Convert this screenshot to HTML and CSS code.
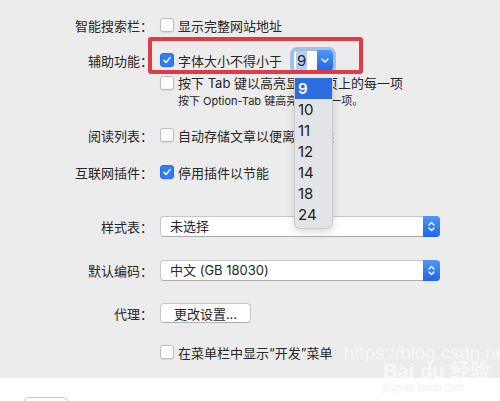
FILE: index.html
```html
<!DOCTYPE html>
<html lang="zh-CN">
<head>
    <meta charset="UTF-8">
    <meta name="viewport" content="width=device-width, initial-scale=1.0">
    <title>高级</title>
    <link rel="stylesheet" href="styles.css">
</head>
<body>
    <div class="pane">
        <!-- Smart search field -->
        <div class="row r-search">
            <div class="label">智能搜索栏：</div>
            <div class="ctrl"><span class="check"></span><span>显示完整网站地址</span></div>
        </div>

        <!-- Accessibility -->
        <div class="row r-access">
            <div class="label">辅助功能：</div>
            <div class="ctrl">
                <span class="check on"><svg viewBox="0 0 14 14"><path d="M3.4 7.3 L5.9 9.8 L10.6 4.2" /></svg></span>
                <span>字体大小不得小于</span>
                <div class="mini-select">
                    <span class="mini-value"><span class="sel">9</span></span>
                    <span class="mini-arrow"><svg width="8" height="5" viewBox="0 0 8 5"><path d="M1 1 L4 4 L7 1" /></svg></span>
                    <ul class="menu">
                        <li class="active">9</li>
                        <li>10</li>
                        <li>11</li>
                        <li>12</li>
                        <li>14</li>
                        <li>18</li>
                        <li>24</li>
                    </ul>
                </div>
            </div>
            <div class="mark"></div>
        </div>
        <div class="row r-tab">
            <div class="label"></div>
            <div class="ctrl"><span class="check"></span><span>按下 Tab 键以高亮显示网页上的每一项</span></div>
        </div>
        <div class="row r-note">
            <div class="label"></div>
            <div class="ctrl note">按下 Option-Tab 键高亮显示每一项。</div>
        </div>

        <!-- Reading list -->
        <div class="row r-reading">
            <div class="label">阅读列表：</div>
            <div class="ctrl"><span class="check"></span><span>自动存储文章以便离线阅读</span></div>
        </div>

        <!-- Plug-ins -->
        <div class="row r-plugins">
            <div class="label">互联网插件：</div>
            <div class="ctrl">
                <span class="check on"><svg viewBox="0 0 14 14"><path d="M3.4 7.3 L5.9 9.8 L10.6 4.2" /></svg></span>
                <span>停用插件以节能</span>
            </div>
        </div>

        <!-- Style sheet -->
        <div class="row r-style">
            <div class="label">样式表：</div>
            <div class="ctrl">
                <div class="popup">
                    <span class="popup-text">未选择</span>
                    <span class="popup-step"><svg width="7" height="11" viewBox="0 0 7 11"><path d="M1 4 L3.5 1.5 L6 4 M1 7 L3.5 9.5 L6 7" /></svg></span>
                </div>
            </div>
        </div>

        <!-- Default encoding -->
        <div class="row r-encoding">
            <div class="label">默认编码：</div>
            <div class="ctrl">
                <div class="popup">
                    <span class="popup-text">中文 (GB 18030)</span>
                    <span class="popup-step"><svg width="7" height="11" viewBox="0 0 7 11"><path d="M1 4 L3.5 1.5 L6 4 M1 7 L3.5 9.5 L6 7" /></svg></span>
                </div>
            </div>
        </div>

        <!-- Proxies -->
        <div class="row r-proxy">
            <div class="label">代理：</div>
            <div class="ctrl"><button class="push">更改设置...</button></div>
        </div>

        <!-- Develop menu -->
        <div class="row r-develop">
            <div class="label"></div>
            <div class="ctrl"><span class="check"></span><span>在菜单栏中显示“开发”菜单</span></div>
        </div>

        <div class="watermark">
            <div class="wm-url">https://blog.csdn.net/m</div>
            <div class="wm-logo">Bai<span class="wm-paw">du</span> 经验</div>
            <div class="wm-site">jingyan.baidu.com</div>
        </div>
    </div>
    <div class="footer"><span class="footer-btn"></span></div>
</body>
</html>
```

FILE: styles.css
```css
html, body {
    height: 401px;
    overflow: hidden;
}
body {
    margin: 0;
    background: #fff;
    font-family: Inter, "Noto Sans CJK SC", sans-serif;
    font-size: 13px;
    color: #262626;
}
.pane {
    position: relative;
    background: #ececec;
    padding: 15px 0 16px;
}
.row {
    position: relative;
    display: grid;
    grid-template-columns: 153px 1fr;
    column-gap: 7px;
    align-items: center;
    height: 20px;
}
.label {
    text-align: right;
    white-space: nowrap;
}
.ctrl {
    display: flex;
    align-items: center;
    gap: 4px;
    white-space: nowrap;
}
.r-access {
    margin-top: 12px;
    height: 26px;
}
.r-tab {
    height: 18px;
}
.r-note {
    height: 18px;
}
.r-reading {
    margin-top: 16px;
}
.r-plugins {
    margin-top: 17px;
}
.r-style {
    margin-top: 33px;
    height: 22px;
}
.r-encoding {
    margin-top: 22px;
    height: 22px;
}
.r-proxy {
    margin-top: 22px;
}
.r-develop {
    margin-top: 19px;
}
.note {
    font-size: 11px;
    padding-left: 18px;
}

/* checkboxes */
.check {
    width: 14px;
    height: 14px;
    box-sizing: border-box;
    border: 1px solid #bcbcbc;
    border-radius: 3px;
    background: #fff;
    box-shadow: 0 0.5px 1px rgba(0, 0, 0, 0.08);
    flex: none;
    display: flex;
}
.check.on {
    background: #2f7cf6;
    border-color: #2a6fdf;
}
.check svg {
    width: 12px;
    height: 12px;
}
.check path {
    stroke: #fff;
    stroke-width: 1.8;
    fill: none;
    stroke-linecap: round;
    stroke-linejoin: round;
}

/* font size select */
.mini-select {
    position: relative;
    display: flex;
    width: 40px;
    height: 21px;
    margin-left: 7px;
    border-radius: 4px;
    box-shadow: 0 0 0 3px #9dc1f2;
}
.mini-value {
    flex: 1;
    background: #fff;
    border: 1px solid #a9b9d2;
    border-right: none;
    border-radius: 4px 0 0 4px;
    font-size: 15px;
    line-height: 19px;
    padding-left: 2px;
}
.sel {
    background: #b5d2f6;
    padding: 0 1px;
}
.mini-arrow {
    width: 16px;
    display: flex;
    align-items: center;
    justify-content: center;
    background: linear-gradient(#4d97fa, #2165e6);
    border-radius: 0 4px 4px 0;
}
.mini-arrow path,
.popup-step path {
    stroke: #fff;
    stroke-width: 1.4;
    fill: none;
    stroke-linecap: round;
    stroke-linejoin: round;
}
.menu {
    position: absolute;
    top: 28px;
    left: 1px;
    width: 39px;
    margin: 0;
    padding: 0 0 3px;
    list-style: none;
    box-sizing: border-box;
    background: #e3e4e7;
    border: 1px solid #c8c9cc;
    border-top: none;
    border-radius: 0 0 6px 6px;
    box-shadow: 0 3px 8px rgba(0, 0, 0, 0.15);
    z-index: 2;
}
.menu li {
    height: 21px;
    line-height: 21px;
    padding-left: 3px;
    font-size: 15px;
    color: #222;
}
.menu li.active {
    background: #2d6de2;
    color: #fff;
    font-weight: 600;
}

/* red annotation frame */
.mark {
    position: absolute;
    left: 148px;
    top: -10px;
    width: 215px;
    height: 37px;
    box-sizing: border-box;
    border: 4px solid #e03a46;
    border-radius: 3px;
}

/* popup buttons */
.popup {
    display: flex;
    width: 280px;
    height: 21px;
    box-sizing: border-box;
    background: #fff;
    border: 1px solid #c6c6c6;
    border-bottom-color: #aaa;
    border-radius: 4px;
}
.popup-text {
    flex: 1;
    padding-left: 9px;
    line-height: 19px;
}
.popup-step {
    width: 17px;
    margin: -1px -1px -1px 0;
    display: flex;
    align-items: center;
    justify-content: center;
    background: linear-gradient(#4d97fa, #2165e6);
    border-radius: 0 4px 4px 0;
}
.push {
    width: 91px;
    height: 20px;
    padding: 0;
    font: inherit;
    color: inherit;
    background: #fff;
    border: 1px solid #c6c6c6;
    border-bottom-color: #adadad;
    border-radius: 4px;
}

/* watermark */
.watermark {
    position: absolute;
    left: 344px;
    top: 343px;
    color: rgba(255, 255, 255, 0.6);
    white-space: nowrap;
    font-family: "Liberation Sans", sans-serif;
    z-index: 3;
}
.wm-url {
    font-size: 18px;
    line-height: 20px;
    letter-spacing: 0.3px;
}
.wm-logo {
    margin-left: 39px;
    font-size: 20px;
    font-weight: bold;
    line-height: 22px;
    margin-top: -3px;
}
.wm-paw {
    margin-left: 6px;
}
.wm-site {
    margin-left: 39px;
    font-size: 10px;
    line-height: 12px;
    color: rgba(225, 225, 225, 0.5);
}

.footer {
    height: 23px;
    position: relative;
}
.footer-btn {
    position: absolute;
    left: 24px;
    top: 19px;
    width: 42px;
    height: 10px;
    border: 1px solid #cbc4e6;
    border-radius: 4px;
}
```
